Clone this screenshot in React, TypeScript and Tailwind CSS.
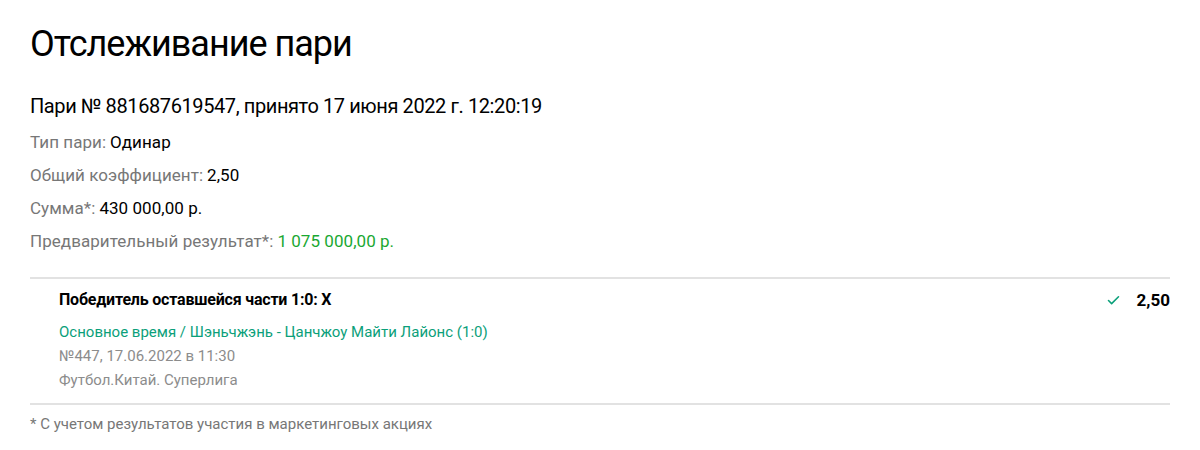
import { Check } from 'lucide-react'

const details = [
  { label: 'Тип пари:', value: 'Одинар', tone: 'text-black' },
  { label: 'Общий коэффициент:', value: '2,50', tone: 'text-black' },
  { label: 'Сумма*:', value: '430 000,00 р.', tone: 'text-black' },
  { label: 'Предварительный результат*:', value: '1 075 000,00 р.', tone: 'text-[#1aa832]' },
]

export default function App() {
  return (
    <div className="w-[1200px] h-[450px] bg-white px-[30px] pt-[22px] font-['Roboto',sans-serif] text-black">
      <h1 className="text-[36px] leading-[44px] tracking-[-1px]">Отслеживание пари</h1>

      <p className="mt-[26px] text-[20px] leading-[28px] tracking-[-0.4px]">
        Пари № 881687619547, принято 17 июня 2022 г. 12:20:19
      </p>

      <div className="mt-[6px] flex flex-col">
        {details.map((row) => (
          <div key={row.label} className="h-[33px] flex items-center text-[17px] tracking-[0.05px]">
            <span className="text-[#777]">{row.label}</span>
            <span className={`ml-[4px] ${row.tone}`}>{row.value}</span>
          </div>
        ))}
      </div>

      <div className="mt-[19px] border-t-2 border-[#e2e2e2] pl-[29px] pt-[9px] pb-[11px] flex justify-between">
        <div className="flex flex-col">
          <div className="text-[16px] leading-[24px] font-bold tracking-[-0.2px]">Победитель оставшейся части 1:0: X</div>
          <div className="mt-[8px] text-[15px] leading-[24px] text-[#0ba07a]">
            Основное время / Шэньчжэнь - Цанчжоу Майти Лайонс (1:0)
          </div>
          <div className="text-[15px] leading-[24px] text-[#8c8c8c]">№447, 17.06.2022 в 11:30</div>
          <div className="text-[15px] leading-[24px] text-[#8c8c8c]">Футбол.Китай. Суперлига</div>
        </div>
        <div className="flex items-start gap-[16px] h-[24px]">
          <Check className="mt-[5px] w-[15px] h-[15px] text-[#0ba07a]" strokeWidth={2.5} />
          <span className="text-[17px] leading-[24px] font-bold">2,50</span>
        </div>
      </div>

      <div className="border-t-2 border-[#e2e2e2] pt-[9px] text-[15px] leading-[20px] text-[#777]">
        * С учетом результатов участия в маркетинговых акциях
      </div>
    </div>
  )
}
